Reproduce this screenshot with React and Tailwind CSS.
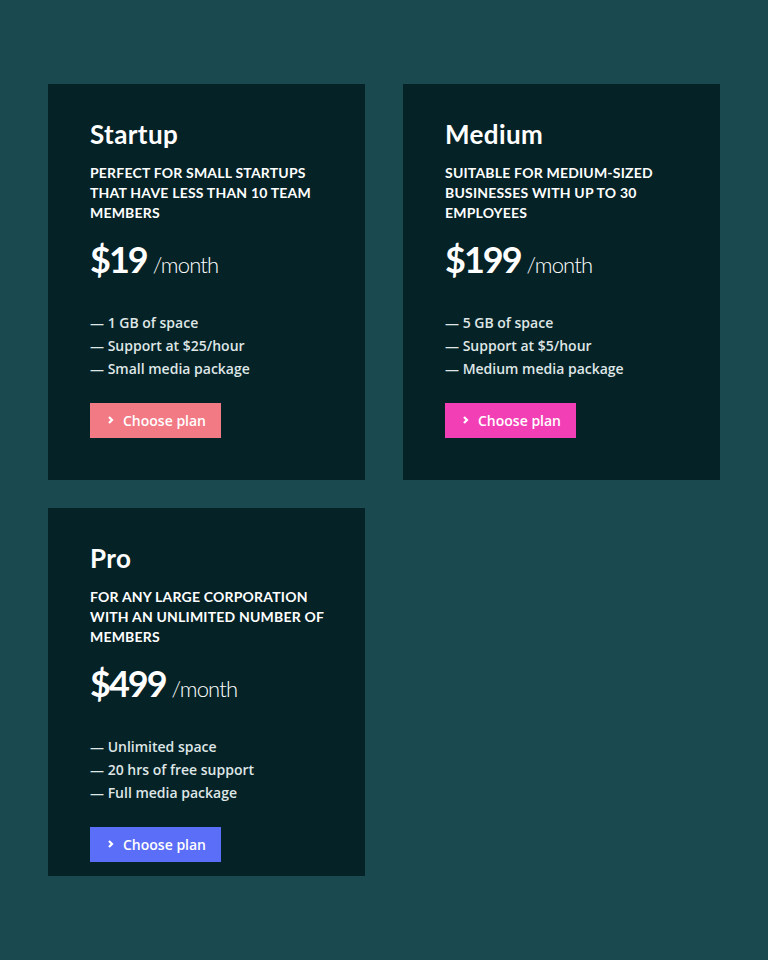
const plans = [
  {
    name: "Startup",
    desc: "Perfect for small startups that have less than 10 team members",
    price: "$19",
    features: ["1 GB of space", "Support at $25/hour", "Small media package"],
    btn: "bg-[#f27a85]",
    pb: "pb-[42px]",
  },
  {
    name: "Medium",
    desc: "Suitable for medium-sized businesses with up to 30 employees",
    price: "$199",
    features: ["5 GB of space", "Support at $5/hour", "Medium media package"],
    btn: "bg-[#f23fb6]",
    pb: "pb-[42px]",
  },
  {
    name: "Pro",
    desc: "For any large corporation with an unlimited number of members",
    price: "$499",
    features: ["Unlimited space", "20 hrs of free support", "Full media package"],
    btn: "bg-[#5b6ef7]",
    pb: "pb-[14px]",
  },
];

function PlanCard({ plan }) {
  return (
    <div className={`bg-[#052226] pl-[42px] pr-[30px] pt-[34px] ${plan.pb} h-full`}>
      <h2 className="font-['Lato',sans-serif] font-bold text-white text-[26px] leading-[32px] tracking-[0.4px]">
        {plan.name}
      </h2>
      <p className="mt-[13px] font-['Lato',sans-serif] font-bold uppercase text-white text-[14px] leading-[20px] tracking-[0.2px]">
        {plan.desc}
      </p>
      <div className="mt-[14px] flex items-baseline h-[44px] leading-[44px] font-['Lato',sans-serif] text-white">
        <span className="text-[36px] font-bold tracking-[-2px]">{plan.price}</span>
        <span className="ml-[6px] text-[22px] font-light tracking-[-0.8px]">/month</span>
      </div>
      <ul className="mt-[30px] font-['Open_Sans',sans-serif] font-semibold text-[14px] leading-[23px] text-[#dfe6e6]">
        {plan.features.map((f) => (
          <li key={f}>— {f}</li>
        ))}
      </ul>
      <button
        className={`mt-[23px] ${plan.btn} w-[131px] h-[35px] flex items-center pl-[18px] pb-[1px] font-['Open_Sans',sans-serif] font-semibold text-[14px] text-white`}
      >
        <svg className="w-[6px] h-[8px] mr-[9px]" viewBox="0 0 6 8" fill="none" stroke="currentColor" strokeWidth={2.2}>
          <path d="M1 1l3 3-3 3" />
        </svg>
        Choose plan
      </button>
    </div>
  );
}

export default function App() {
  return (
    <div className="min-h-[960px] bg-[#1a4a4f] pt-[84px] pl-[48px]">
      <div className="grid grid-cols-[317px_317px] gap-x-[38px] gap-y-[28px]">
        {plans.map((p) => (
          <PlanCard key={p.name} plan={p} />
        ))}
      </div>
    </div>
  );
}
